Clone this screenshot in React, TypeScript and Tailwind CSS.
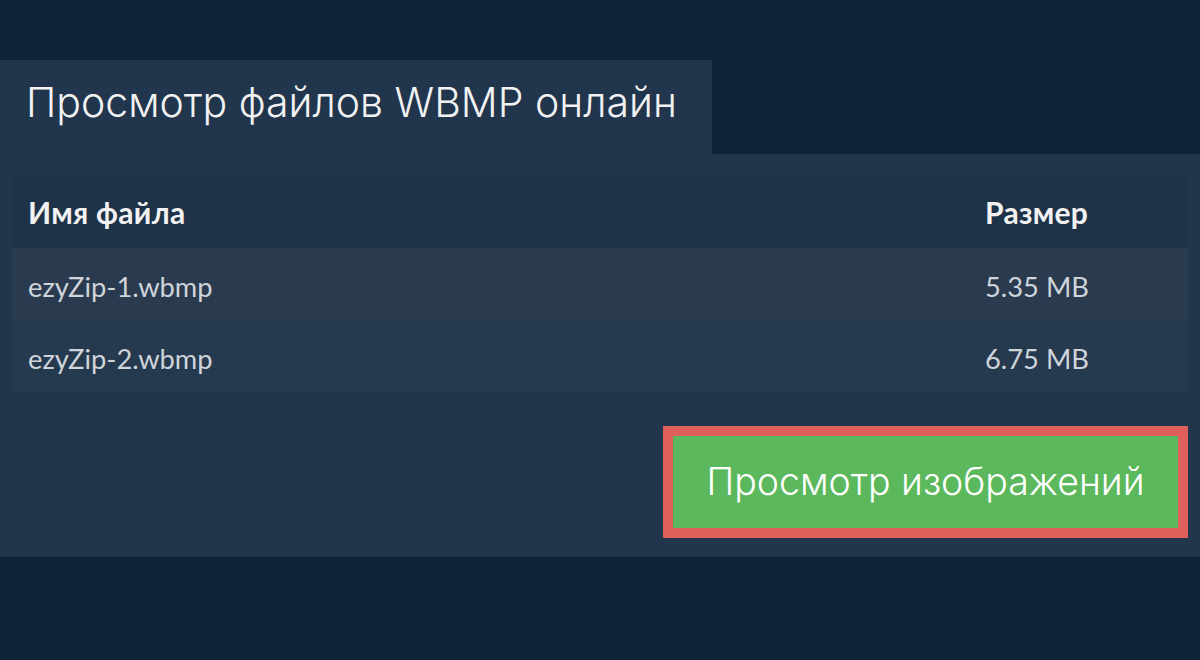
import React from "react";

const rows = [
  { name: "ezyZip-1.wbmp", size: "5.35 MB", bg: "bg-[#2a3b4f]" },
  { name: "ezyZip-2.wbmp", size: "6.75 MB", bg: "bg-[#25394f]" },
];

export default function App() {
  return (
    <div className="h-[660px] w-[1200px] bg-[#0f2339] pt-[60px]">
      <div className="flex h-[94px] w-[712px] items-center bg-[#21364d] pb-[10px] pl-[26px]">
        <h1
          className="text-[41px] font-light leading-none text-[#f2f2f2]"
          style={{ fontFamily: "Inter, 'Noto Sans', sans-serif" }}
        >
          Просмотр файлов WBMP онлайн
        </h1>
      </div>
      <div className="bg-[#21364d] px-3 pb-[19px] pt-[22px]">
        <div style={{ fontFamily: "Lato, 'Noto Sans', sans-serif" }}>
          <div className="flex h-[72px] items-center bg-[#1e3248] text-[30px] font-bold tracking-[0.3px] text-[#f2f2f2]">
            <div className="flex-1 pl-4">Имя файла</div>
            <div className="w-[203px]">Размер</div>
          </div>
          {rows.map((r) => (
            <div
              key={r.name}
              className={`flex h-[72px] items-center ${r.bg} pt-[6px] text-[27.3px] text-[#cfd4da]`}
            >
              <div className="flex-1 pl-4">{r.name}</div>
              <div className="w-[203px]">{r.size}</div>
            </div>
          ))}
        </div>
        <div className="mt-[34px] flex justify-end">
          <button
            className="flex h-[112px] w-[525px] items-center justify-center border-[10px] border-[#de5f5c] bg-[#5cb85c] text-[37.5px] font-light text-white"
            style={{ fontFamily: "Inter, 'Noto Sans', sans-serif" }}
          >
            Просмотр изображений
          </button>
        </div>
      </div>
    </div>
  );
}
